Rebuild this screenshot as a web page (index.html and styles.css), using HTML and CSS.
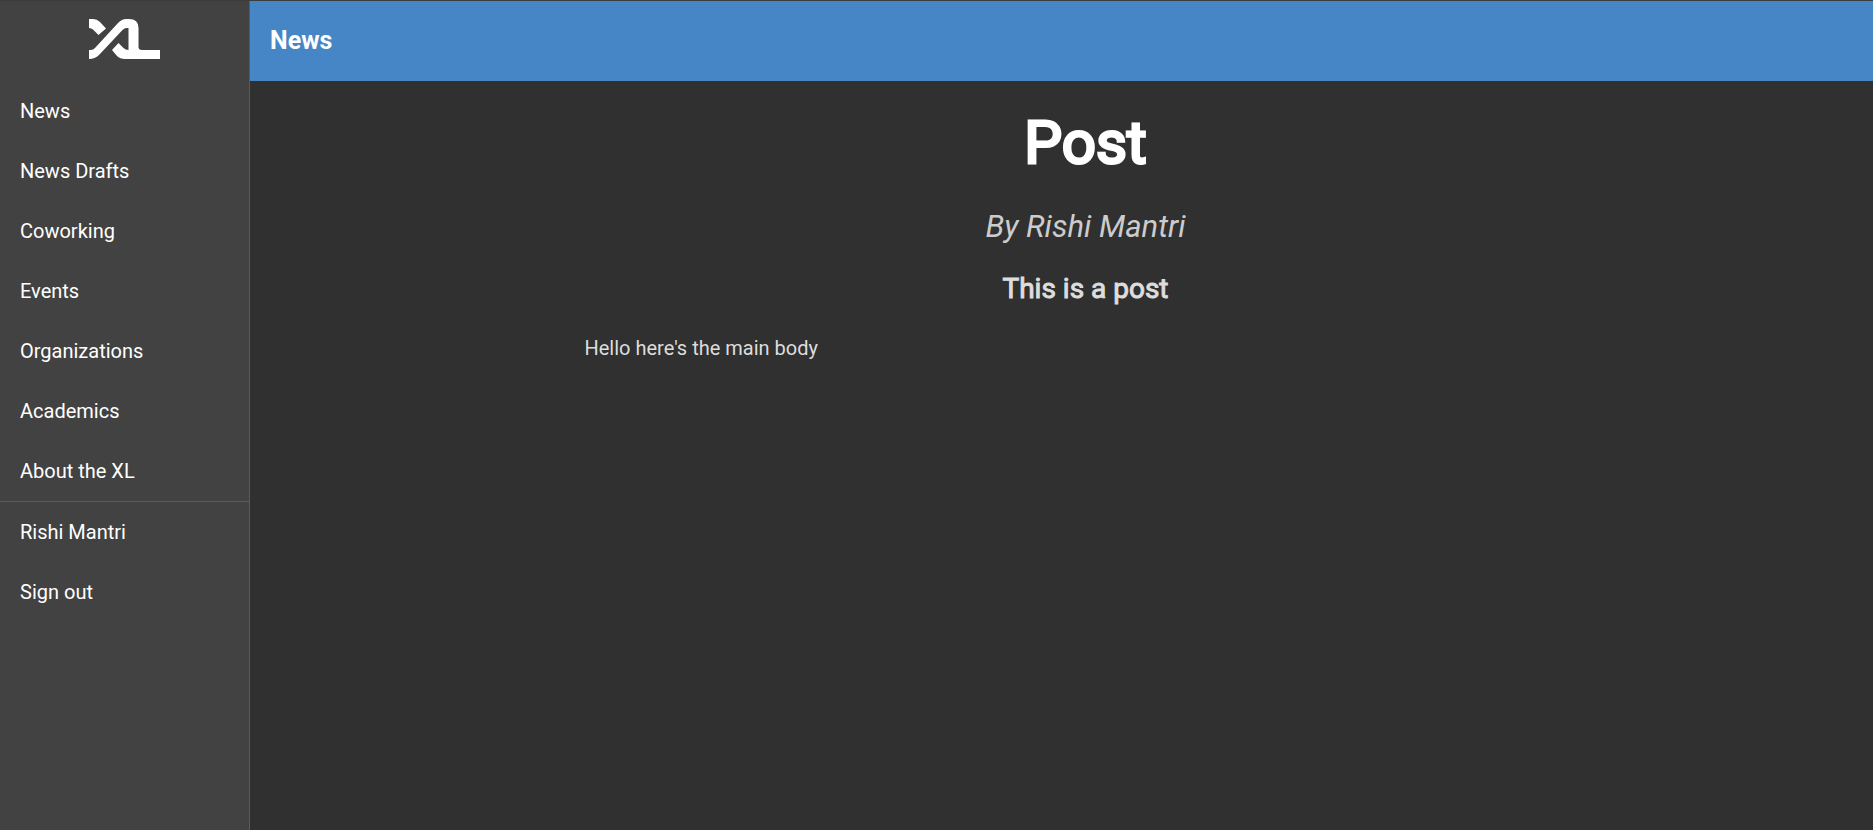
FILE: index.html
```html
<!DOCTYPE html>
<html lang="en">
<head>
<meta charset="utf-8">
<title>News</title>
<link rel="stylesheet" href="styles.css">
</head>
<body>
<div class="app">
  <aside class="sidebar">
    <a class="logo" href="#" aria-label="XL home">
      <svg class="logo-mark" viewBox="0 0 71 40" aria-hidden="true">
        <path d="M0 0H4Q8 0 11 3L17 9.500L9.500 16L4 10.500Q2.500 9 0 9Z"/>
        <path fill-rule="evenodd" d="M0 40V31H2Q4 31 6 29L29 4Q33 0 37 0H40Q49.500 0 49.500 9V28Q49.500 31 53 31H71V40H36Q31 40 28 37L23 31L29.500 24L34.500 29Q36.500 31 39.500 31V9H37.500Q35.500 9 33.500 11L10 36Q6 40 0 40Z"/>
      </svg>
    </a>
    <nav class="menu">
      <a class="menu-item" href="#">News</a>
      <a class="menu-item" href="#">News Drafts</a>
      <a class="menu-item" href="#">Coworking</a>
      <a class="menu-item" href="#">Events</a>
      <a class="menu-item" href="#">Organizations</a>
      <a class="menu-item" href="#">Academics</a>
      <a class="menu-item" href="#">About the XL</a>
    </nav>
    <nav class="menu menu-account" aria-label="Account">
      <a class="menu-item" href="#">Rishi Mantri</a>
      <a class="menu-item" href="#">Sign out</a>
    </nav>
  </aside>
  <div class="page">
    <header class="toolbar">News</header>
    <main class="content">
      <article class="post">
        <h1 class="post-title">Post</h1>
        <p class="post-author">By Rishi Mantri</p>
        <h2 class="post-subtitle">This is a post</h2>
        <p class="post-body">Hello here's the main body</p>
      </article>
    </main>
  </div>
</div>
</body>
</html>
```
FILE: styles.css
```css
* {
  box-sizing: border-box;
}

body {
  margin: 0;
  background: #303030;
  color: #fff;
  font-family: Roboto, "Liberation Sans", sans-serif;
  font-size: 20px;
}

.app {
  display: flex;
  min-height: 100vh;
  border-top: 1px solid #3c3c3c;
}

.sidebar {
  flex: 0 0 250px;
  background: #424242;
  border-right: 1px solid #5a5a5a;
}

.logo {
  display: flex;
  align-items: center;
  justify-content: center;
  height: 80px;
  padding-bottom: 4px;
}

.logo-mark {
  width: 71px;
  height: 40px;
  fill: #fff;
}

.menu {
  display: flex;
  flex-direction: column;
}

.menu-account {
  border-top: 1px solid #5a5a5a;
}

.menu-item {
  padding: 0 20px;
  color: #fff;
  line-height: 60px;
  text-decoration: none;
}

.page {
  flex: 1;
  min-width: 0;
}

.toolbar {
  padding: 0 20px;
  background: #4686c6;
  font-size: 25px;
  font-weight: 700;
  line-height: 80px;
}

.content {
  padding: 20px 0 20px 48px;
}

.post {
  max-width: 1002px;
  margin: 0 auto;
}

.post-title,
.post-author,
.post-subtitle {
  margin: 0;
  text-align: center;
}

.post-title {
  font-size: 60px;
  font-weight: 400;
  line-height: 84px;
  -webkit-text-stroke: 3px currentColor;
}

.post-author {
  margin-top: 22px;
  color: #ccc;
  font-size: 31px;
  font-style: italic;
  line-height: 40px;
}

.post-subtitle {
  margin-top: 22px;
  color: #ddd;
  font-size: 28px;
  font-weight: 400;
  line-height: 40px;
  -webkit-text-stroke: 1px currentColor;
}

.post-body {
  margin: 24px 0 0;
  color: #ddd;
  line-height: 30px;
}
```
